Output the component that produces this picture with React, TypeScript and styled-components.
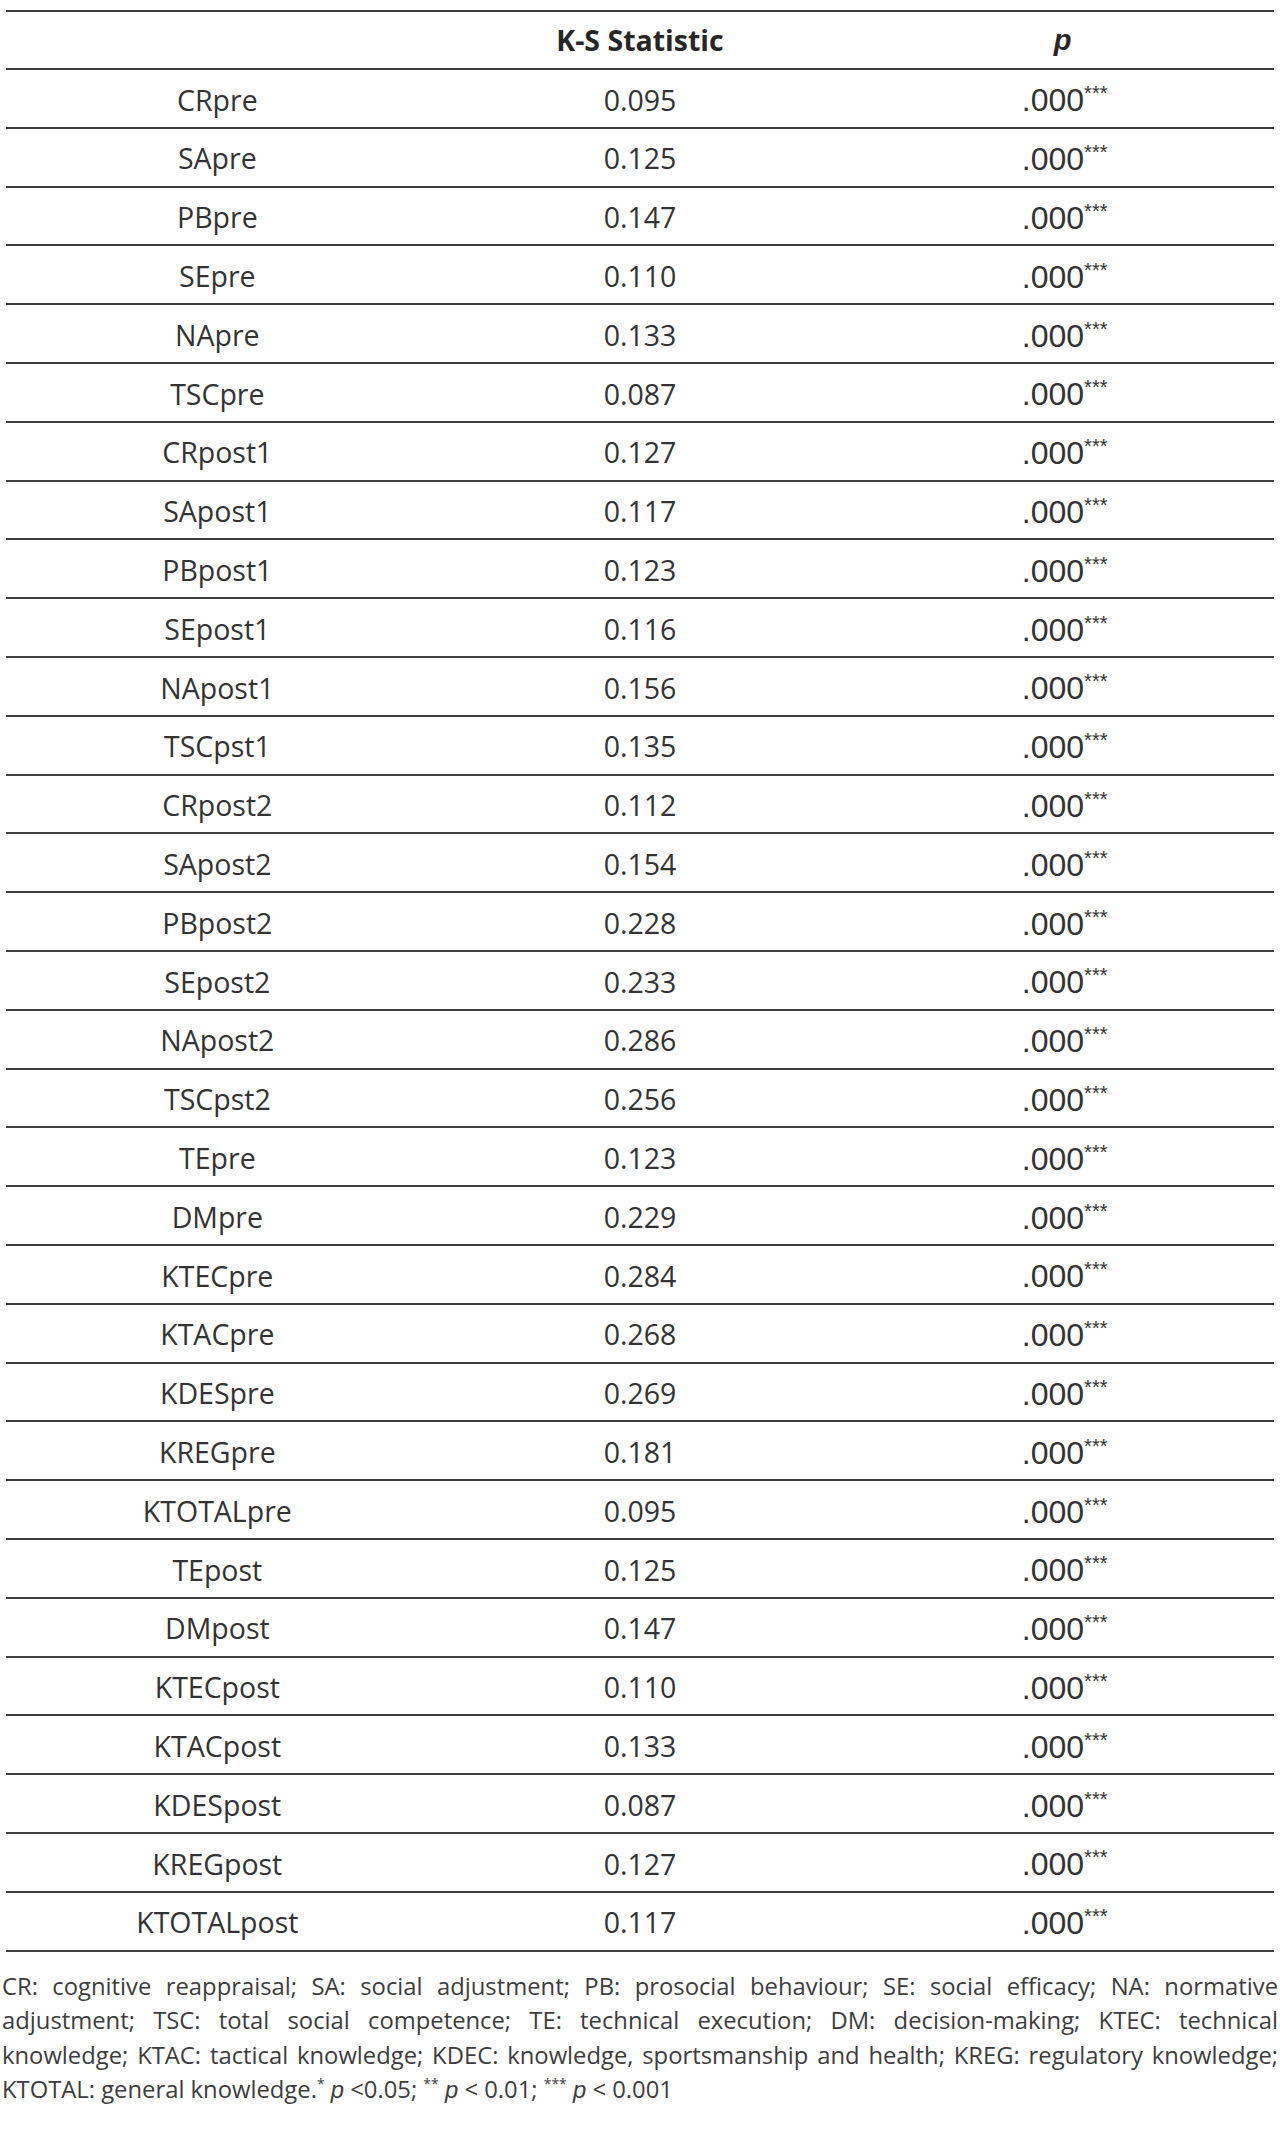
import styled, { createGlobalStyle } from 'styled-components';

const GlobalStyle = createGlobalStyle`
  body {
    margin: 0;
    background: #ffffff;
    font-family: 'Open Sans', 'Liberation Sans', sans-serif;
    color: #333333;
  }
`;

const Page = styled.div`
  padding: 10px 2px 0;
  width: 1280px;
  box-sizing: border-box;
`;

const Table = styled.div`
  margin: 0 4px;
  border-top: 2px solid #3d3d3d;
`;

const Row = styled.div<{ $header?: boolean }>`
  display: grid;
  grid-template-columns: repeat(3, 1fr);
  align-items: center;
  box-sizing: border-box;
  height: ${(p) => (p.$header ? '58px' : '58.8px')};
  border-bottom: 2px solid #3d3d3d;
`;

const Cell = styled.div`
  text-align: center;
  font-size: 28.5px;
  line-height: 1;
  color: #333333;
  padding-top: 3px;
`;

const HeadCell = styled(Cell)`
  font-weight: 700;
  color: #262626;
  padding-top: 0;
`;

const PHead = styled(HeadCell)`
  font-family: 'Liberation Sans', Arial, sans-serif;
  font-style: italic;
  font-size: 29px;
`;

const PCell = styled(Cell)`
  font-family: 'Liberation Sans', Arial, sans-serif;
  font-size: 32px;
  padding-left: 4px;
`;

const Stars = styled.span`
  font-size: 20px;
  vertical-align: 11px;
  letter-spacing: 0;
`;

const Footnote = styled.div`
  margin-top: 17px;
  font-size: 23.8px;
  line-height: 34.5px;
  color: #3d3d3d;
`;

const NoteLine = styled.div<{ $last?: boolean }>`
  text-align: ${(p) => (p.$last ? 'left' : 'justify')};
  text-align-last: ${(p) => (p.$last ? 'left' : 'justify')};
  white-space: nowrap;
`;

const Sup = styled.sup`
  font-size: 14px;
  vertical-align: 9px;
  line-height: 0;
`;

const Ital = styled.i`
  font-family: 'Liberation Sans', Arial, sans-serif;
`;

const rows: [string, string][] = [
  ['CRpre', '0.095'],
  ['SApre', '0.125'],
  ['PBpre', '0.147'],
  ['SEpre', '0.110'],
  ['NApre', '0.133'],
  ['TSCpre', '0.087'],
  ['CRpost1', '0.127'],
  ['SApost1', '0.117'],
  ['PBpost1', '0.123'],
  ['SEpost1', '0.116'],
  ['NApost1', '0.156'],
  ['TSCpst1', '0.135'],
  ['CRpost2', '0.112'],
  ['SApost2', '0.154'],
  ['PBpost2', '0.228'],
  ['SEpost2', '0.233'],
  ['NApost2', '0.286'],
  ['TSCpst2', '0.256'],
  ['TEpre', '0.123'],
  ['DMpre', '0.229'],
  ['KTECpre', '0.284'],
  ['KTACpre', '0.268'],
  ['KDESpre', '0.269'],
  ['KREGpre', '0.181'],
  ['KTOTALpre', '0.095'],
  ['TEpost', '0.125'],
  ['DMpost', '0.147'],
  ['KTECpost', '0.110'],
  ['KTACpost', '0.133'],
  ['KDESpost', '0.087'],
  ['KREGpost', '0.127'],
  ['KTOTALpost', '0.117'],
];

export default function App() {
  return (
    <Page>
      <GlobalStyle />
      <Table>
        <Row $header>
          <HeadCell />
          <HeadCell>K-S Statistic</HeadCell>
          <PHead>p</PHead>
        </Row>
        {rows.map(([name, ks]) => (
          <Row key={name}>
            <Cell>{name}</Cell>
            <Cell>{ks}</Cell>
            <PCell>
              .000<Stars>***</Stars>
            </PCell>
          </Row>
        ))}
      </Table>
      <Footnote>
        <NoteLine>
          CR: cognitive reappraisal; SA: social adjustment; PB: prosocial behaviour; SE: social efficacy; NA: normative
        </NoteLine>
        <NoteLine>
          adjustment; TSC: total social competence; TE: technical execution; DM: decision-making; KTEC: technical
        </NoteLine>
        <NoteLine>
          knowledge; KTAC: tactical knowledge; KDEC: knowledge, sportsmanship and health; KREG: regulatory knowledge;
        </NoteLine>
        <NoteLine $last>
          KTOTAL: general knowledge.<Sup>*</Sup> <Ital>p</Ital> &lt;0.05; <Sup>**</Sup> <Ital>p</Ital> &lt; 0.01;{' '}
          <Sup>***</Sup> <Ital>p</Ital> &lt; 0.001
        </NoteLine>
      </Footnote>
    </Page>
  );
}
